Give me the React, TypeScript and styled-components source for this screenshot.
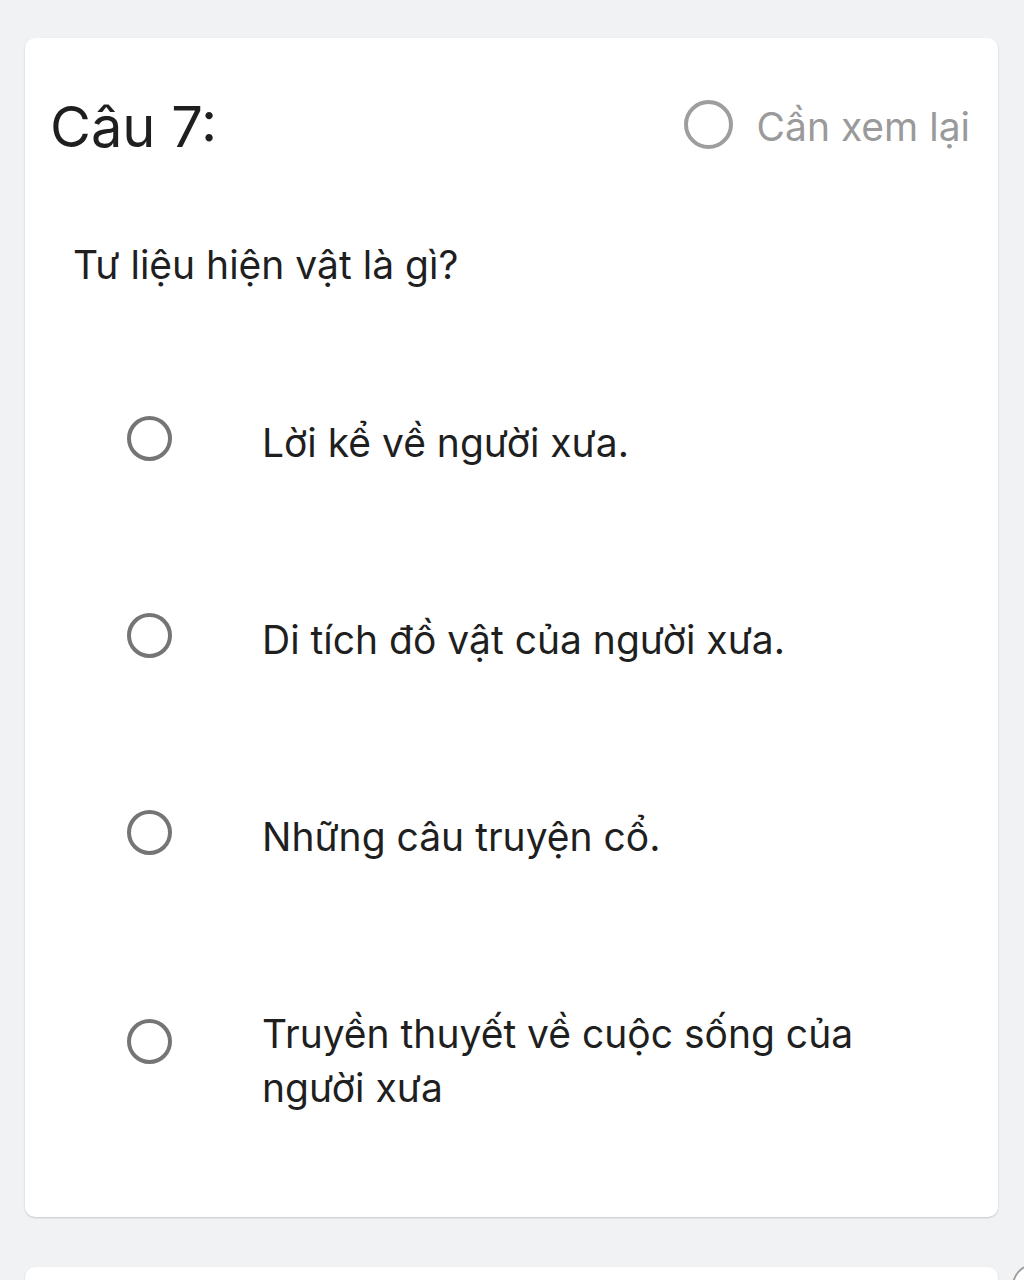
import React from "react";
import styled, { createGlobalStyle } from "styled-components";

const Global = createGlobalStyle`
  html, body { margin: 0; padding: 0; background: #f1f2f4; }
  body { font-family: Inter, "Noto Sans", "Liberation Sans", sans-serif; }
`;

const Page = styled.div`
  position: relative;
  width: 1024px;
  height: 1280px;
  overflow: hidden;
  padding: 38px 26px 0 25px;
  box-sizing: border-box;
  display: flex;
  flex-direction: column;
  gap: 50px;
`;

const Card = styled.section`
  background: #ffffff;
  border-radius: 10px;
  box-shadow: 0 1px 2px rgba(0, 0, 0, 0.18);
  box-sizing: border-box;
  flex-shrink: 0;
`;

const QuestionCard = styled(Card)`
  height: 1179px;
  padding: 57px 28px 0 27px;
`;

const NextCard = styled(Card)`
  height: 80px;
`;

const Header = styled.div`
  display: flex;
  align-items: center;
  justify-content: space-between;
`;

const Title = styled.h2`
  margin: 0 0 0 -2px;
  font-size: 56px;
  font-weight: 400;
  color: #1f1f1f;
  line-height: 64px;
`;

const Review = styled.label`
  display: flex;
  align-items: center;
  gap: 24px;
  color: #9a9a9a;
  font-size: 39px;
  line-height: 48px;
`;

const Circle = styled.span<{ $size: number; $color: string }>`
  display: inline-block;
  width: ${(p) => p.$size}px;
  height: ${(p) => p.$size}px;
  border: 4px solid ${(p) => p.$color};
  border-radius: 50%;
  box-sizing: border-box;
  flex-shrink: 0;
`;

const ReviewCircle = styled(Circle)`
  margin-top: -6px;
`;

const Question = styled.p`
  margin: 82px 0 0 21px;
  font-size: 39px;
  line-height: 48px;
  color: #1f1f1f;
`;

const Options = styled.div`
  display: flex;
  flex-direction: column;
  margin: 127px 0 0 75px;
  gap: 143px;
`;

const Option = styled.label`
  display: grid;
  grid-template-columns: 135px 1fr;
  align-items: start;
`;

const RadioCell = styled.div<{ $shift: number }>`
  height: 54px;
  display: flex;
  align-items: center;
  margin-top: ${(p) => p.$shift}px;
`;

const OptionText = styled.span`
  font-size: 39px;
  line-height: 54px;
  color: #1f1f1f;
  max-width: 620px;
`;

const Fab = styled.div`
  position: absolute;
  left: 1012px;
  top: 1264px;
  width: 40px;
  height: 40px;
  border-radius: 50%;
  border: 2px solid #9e9e9e;
  background: #fff;
`;

const options = [
  { text: "Lời kể về người xưa.", shift: -5 },
  { text: "Di tích đồ vật của người xưa.", shift: -5 },
  { text: "Những câu truyện cổ.", shift: -5 },
  { text: "Truyền thuyết về cuộc sống của người xưa", shift: 7 },
];

export default function App() {
  return (
    <>
      <Global />
      <Page>
        <QuestionCard>
          <Header>
            <Title>Câu 7:</Title>
            <Review>
              <ReviewCircle $size={49} $color="#9e9e9e" />
              Cần xem lại
            </Review>
          </Header>
          <Question>Tư liệu hiện vật là gì?</Question>
          <Options>
            {options.map((o) => (
              <Option key={o.text}>
                <RadioCell $shift={o.shift}>
                  <Circle $size={45} $color="#757575" />
                </RadioCell>
                <OptionText>{o.text}</OptionText>
              </Option>
            ))}
          </Options>
        </QuestionCard>
        <NextCard />
        <Fab />
      </Page>
    </>
  );
}
